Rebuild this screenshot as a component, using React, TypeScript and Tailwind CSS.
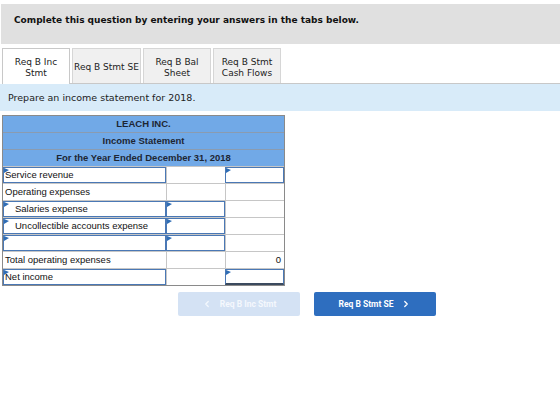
import React from "react";
import { ChevronLeft, ChevronRight } from "lucide-react";

type Cell = { kind: "plain" | "input"; text?: string; right?: boolean; total?: boolean };

type Row = {
  label: string;
  indent?: boolean;
  labelInput?: boolean;
  c2: Cell;
  c3: Cell;
};

const rows: Row[] = [
  { label: "Service revenue", labelInput: true, c2: { kind: "plain" }, c3: { kind: "input" } },
  { label: "Operating expenses", c2: { kind: "plain" }, c3: { kind: "plain" } },
  { label: "Salaries expense", indent: true, labelInput: true, c2: { kind: "input" }, c3: { kind: "plain" } },
  { label: "Uncollectible accounts expense", indent: true, labelInput: true, c2: { kind: "input" }, c3: { kind: "plain" } },
  { label: "", labelInput: true, c2: { kind: "input" }, c3: { kind: "plain" } },
  { label: "Total operating expenses", c2: { kind: "plain" }, c3: { kind: "plain", text: "0", right: true } },
  { label: "Net income", labelInput: true, c2: { kind: "plain" }, c3: { kind: "input", total: true } },
];

// little blue marker in the corner of editable cells
const Flag = () => (
  <svg className="absolute left-0 top-0" width="5" height="5" viewBox="0 0 5 5">
    <path d="M0 0 L5 2 L0 5 Z" fill="#2f6db5" />
  </svg>
);

const DataCell: React.FC<{ cell: Cell; width: string }> = ({ cell, width }) => {
  if (cell.kind === "input") {
    return (
      <div
        className={`relative ${width} h-full border border-[#4a78b5] bg-white ${
          cell.total ? "border-b-2 border-b-[#3b4a5e]" : ""
        }`}
      >
        <Flag />
      </div>
    );
  }
  return (
    <div
      className={`${width} h-full border-l border-[#c6c6c6] flex items-center px-[3px] ${
        cell.right ? "justify-end" : ""
      }`}
    >
      {cell.text}
    </div>
  );
};

const tabs = [
  { label: ["Req B Inc", "Stmt"], active: true, w: "w-[68px]" },
  { label: ["Req B Stmt SE"], w: "w-[69px]" },
  { label: ["Req B Bal", "Sheet"], w: "w-[68px]" },
  { label: ["Req B Stmt", "Cash Flows"], w: "w-[68px]" },
];

export default function App() {
  return (
    <div className="w-[560px] h-[412px] bg-white pt-[4px] font-['DejaVu_Sans',sans-serif] text-[#222]">
      <div className="ml-[1px] h-[40px] bg-[#e0e0e0] pt-[10px] pl-[13px] text-[9px] leading-[12px] font-bold text-[#111]">
        Complete this question by entering your answers in the tabs below.
      </div>

      <div className="mt-[5px] ml-[2px] flex items-end gap-[2px] h-[35px] border-b border-[#c8c8c8]">
        {tabs.map((t, i) => (
          <div
            key={i}
            className={`${t.w} flex flex-col items-center justify-center pt-[3px] text-[9px] leading-[11px] border border-b-0 ${
              t.active
                ? "bg-white border-[#c8c8c8] -mb-[1px] h-[36px]"
                : "bg-[#f0f0f0] border-[#d6d6d6] h-[35px]"
            }`}
          >
            {t.label.map((l) => (
              <span key={l}>{l}</span>
            ))}
          </div>
        ))}
      </div>

      <div className="h-[27px] bg-[#d8ebf9] flex items-center pl-[8px] pt-[1px] text-[9.5px] text-[#222]">
        Prepare an income statement for 2018.
      </div>

      <div className="mt-[4px] ml-[2px] w-[283px] border border-[#8a8a8a] font-['Liberation_Sans',Arial,sans-serif] text-[9.5px] text-[#111]">
        <div className="bg-[#71a9e7] font-bold text-[#1d2633]">
          <div className="h-[17px] flex items-center justify-center pt-[1px] border-b border-[#8a9bb0]">LEACH INC.</div>
          <div className="h-[17px] flex items-center justify-center pt-[1px] border-b border-[#8a9bb0]">Income Statement</div>
          <div className="h-[16px] flex items-center justify-center pt-[1px]">For the Year Ended December 31, 2018</div>
        </div>
        {rows.map((r, i) => (
          <div key={i} className="flex h-[17px] border-t border-[#c6c6c6]">
            {r.labelInput ? (
              <div className="relative w-[163px] h-full border border-[#4a78b5] bg-white flex items-center">
                <Flag />
                <span className={r.indent ? "pl-[11px]" : "pl-[1px]"}>{r.label}</span>
              </div>
            ) : (
              <div className={`w-[163px] h-full flex items-center ${r.indent ? "pl-[12px]" : "pl-[2px]"}`}>
                {r.label}
              </div>
            )}
            <DataCell cell={r.c2} width="w-[59px]" />
            <DataCell cell={r.c3} width="w-[59px]" />
          </div>
        ))}
      </div>

      <div className="mt-[6px] flex gap-[14px] pl-[178px] font-['Roboto',sans-serif] font-bold text-[8.5px]">
        <div className="w-[122px] h-[24px] rounded-[2px] bg-[#d4e2f4] text-[#f4f8fd] flex items-center justify-center gap-[8px]">
          <ChevronLeft size={10} strokeWidth={3} />
          <span>Req B Inc Stmt</span>
        </div>
        <div className="w-[122px] h-[24px] rounded-[2px] bg-[#2e6ebf] text-white flex items-center justify-center gap-[8px]">
          <span>Req B Stmt SE</span>
          <ChevronRight size={10} strokeWidth={3} />
        </div>
      </div>
    </div>
  );
}
